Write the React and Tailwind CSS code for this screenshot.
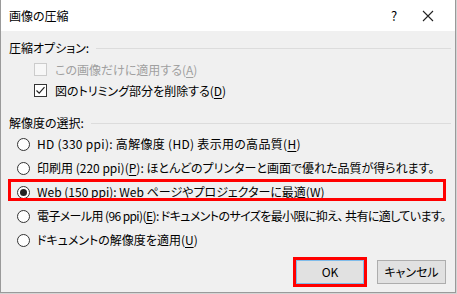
import React from 'react';

// 画像の圧縮 dialog (Windows style)

const jp = "font-['Noto_Sans_CJK_JP','Noto_Sans',sans-serif] [font-feature-settings:'palt']";

const Key = ({ k }) => (
  <>
    (<span className="underline underline-offset-2">{k}</span>)
  </>
);

const Checkbox = ({ checked, disabled }) => (
  <span
    className={`flex h-[13px] w-[13px] shrink-0 items-center justify-center border ${
      disabled ? 'border-[#cccccc] bg-[#f7f7f7]' : 'border-[#333333] bg-white'
    }`}
  >
    {checked && (
      <svg width="11" height="11" viewBox="0 0 11 11" fill="none">
        <path d="M1.5 5.5 L4.2 8.2 L9.5 2.2" stroke="#222" strokeWidth="1.2" />
      </svg>
    )}
  </span>
);

const Radio = ({ checked }) => (
  <span className="flex h-[13px] w-[13px] shrink-0 items-center justify-center rounded-full border border-[#333333] bg-white">
    {checked && <span className="h-[7px] w-[7px] rounded-full bg-[#222222]" />}
  </span>
);

const GroupLabel = ({ children, className = '' }) => (
  <div className={`flex h-[16px] items-center gap-[7px] pl-[8px] pr-[4px] ${className}`}>
    <span className="whitespace-nowrap">{children}</span>
    <span className="h-px flex-1 bg-[#dcdcdc]" />
  </div>
);

const radios = [
  { text: <>HD (330 ppi): 高解像度 (HD) 表示用の高品質<Key k="H" /></>, wide: true },
  { text: <>印刷用 (220 ppi)<Key k="P" />: ほとんどのプリンターと画面で優れた品質が得られます。</> },
  { text: <>Web (150 ppi): Web ページやプロジェクターに最適<Key k="W" /></>, checked: true, marked: true },
  {
    text: <>電子メール用 (96 ppi)<Key k="E" />: ドキュメントのサイズを最小限に抑え、 共有に適しています。</>,
    tight: true,
  },
  { text: <>ドキュメントの解像度を適用<Key k="U" /></> },
];

export default function App() {
  return (
    <div className={`h-[294px] w-[457px] overflow-hidden bg-[#d4d4d4] text-[12px] leading-none text-black ${jp}`}>
      <div className="flex h-[293px] w-[456px] flex-col border-x border-b border-[#9a9a9a] bg-[#f0f0f0]">
        {/* title bar */}
        <div className="flex h-[31px] items-center bg-white pl-[8px]">
          <span className="flex-1 text-[12px]">画像の圧縮</span>
          <span className="w-[30px] text-center text-[13px]">?</span>
          <span className="flex w-[46px] justify-center pr-[8px]">
            <svg width="12" height="12" viewBox="0 0 12 12">
              <path d="M1 1 L11 11 M11 1 L1 11" stroke="#222" strokeWidth="1.1" />
            </svg>
          </span>
        </div>

        {/* compression options */}
        <GroupLabel className="mt-[9px]">圧縮オプション:</GroupLabel>
        <div className="mt-[3px] flex h-[21px] items-center gap-[8px] pl-[33px] text-[#a0a0a0]">
          <Checkbox disabled />
          <span>この画像だけに適用する<Key k="A" /></span>
        </div>
        <div className="flex h-[21px] items-center gap-[8px] pl-[33px]">
          <Checkbox checked />
          <span>図のトリミング部分を削除する<Key k="D" /></span>
        </div>

        {/* resolution */}
        <GroupLabel className="mt-[14px]">解像度の選択:</GroupLabel>
        <div className="ml-[7px] mt-[1px] w-[438px]">
          {radios.map((r, i) => (
            <div key={i} className="relative flex h-[24px] items-center gap-[7px] whitespace-nowrap pl-[9px]">
              <Radio checked={r.checked} />
              <span className={r.tight ? 'tracking-[-0.6px]' : r.wide ? 'tracking-[0.3px]' : ''}>{r.text}</span>
              {r.marked && (
                <span className="pointer-events-none absolute left-0 right-0 top-[-1px] h-[22px] border-[3px] border-[#ff0000]" />
              )}
            </div>
          ))}
        </div>

        {/* buttons */}
        <div className="mt-[5px] flex items-center justify-end gap-[10px] pr-[9px]">
          <div className="border-[3px] border-[#ff0000]">
            <button className="flex h-[24px] w-[68px] items-center justify-center border border-[#7fbbe9] bg-[#e1e1e1] text-[12px]">
              OK
            </button>
          </div>
          <button className="flex h-[24px] w-[69px] items-center justify-center border border-[#adadad] bg-[#e1e1e1] text-[12px]">
            キャンセル
          </button>
        </div>
      </div>
    </div>
  );
}
